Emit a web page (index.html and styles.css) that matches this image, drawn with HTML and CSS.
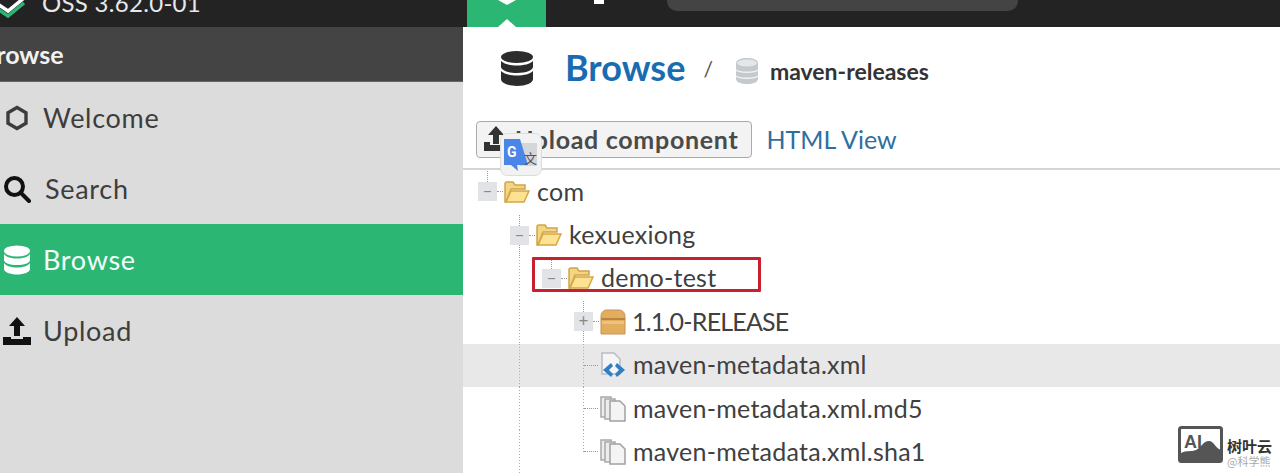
FILE: index.html
```html
<!DOCTYPE html>
<html lang="en">
<head>
    <meta charset="UTF-8">
    <title>Nexus Repository - Browse</title>
    <link rel="stylesheet" href="styles.css">
</head>
<body>
    <div class="topbar">
        <div class="brand">
            <svg class="brand-logo" width="26" height="27" viewBox="0 0 26 27" fill="none" stroke-width="3.500">
                <path d="M-1 10l9 6 16-13" stroke="#2bb673"/>
                <path d="M-1 5l9 6 16-13" stroke="#fff"/>
            </svg>
            <span class="brand-text">OSS 3.62.0-01</span>
        </div>
        <div class="mode-tab">
            <svg width="24" height="27" viewBox="0 0 24 27" fill="#fff"><path d="M3 0h18l-9 5z"/><path d="M3 27l9-8 9 8z"/></svg>
        </div>
        <div class="gear-stub"></div>
        <div class="search-stub"></div>
    </div>

    <div class="layout">
        <nav class="sidebar">
            <div class="sidebar-title">Browse</div>
            <a class="nav-item">
                <svg class="nav-icon" width="24" height="26" viewBox="0 0 24 26" fill="none" stroke="#3c3c3c" stroke-width="3.400"><path d="M12 2.500l9 5.200v10.600l-9 5.200-9-5.200V7.700z"/></svg>
                Welcome
            </a>
            <a class="nav-item nav-search">
                <svg class="nav-icon" width="28" height="28" viewBox="0 0 28 28" fill="none" stroke="#111" stroke-width="4"><circle cx="11.500" cy="11.500" r="8.500"/><path d="M18 18l8 8" stroke-linecap="round"/></svg>
                Search
            </a>
            <a class="nav-item active">
                <svg class="nav-icon" width="28" height="30" viewBox="0 0 28 30" fill="#fff"><ellipse cx="14" cy="6" rx="13" ry="5.500"/><path d="M1 9c2 3 7 4.500 13 4.500S25 12 27 9v6c0 3-6 5-13 5S1 18 1 15z"/><path d="M1 18c2 3 7 4.500 13 4.500S25 21 27 18v6c0 3-6 5.500-13 5.500S1 27 1 24z"/></svg>
                Browse
            </a>
            <a class="nav-item">
                <svg class="nav-icon" width="28" height="28" viewBox="0 0 28 28" fill="#111"><path d="M14 0l8 9h-5v10h-6V9H6z"/><path d="M0 20h8v2h12v-2h8v8H0z"/></svg>
                Upload
            </a>
        </nav>

        <main class="content">
            <div class="page-head">
                <svg class="head-icon" width="32" height="35" viewBox="0 0 32 35" fill="#2c2c2c"><ellipse cx="16" cy="6" rx="16" ry="6"/><path d="M0 10c3 3 9 4.500 16 4.500S29 13 32 10v6c0 3-7 6-16 6S0 19 0 16z"/><path d="M0 20c3 3 9 4.500 16 4.500S29 23 32 20v8c0 4-7 7-16 7S0 32 0 28z"/></svg>
                <h1 class="head-title">Browse</h1>
                <span class="head-sep">/</span>
                <svg class="repo-icon" width="24" height="26" viewBox="0 0 24 26"><path d="M1 5c0-3 5-5 11-5s11 2 11 5v16c0 3-5 5-11 5S1 24 1 21z" fill="#c4c9ce"/><ellipse cx="12" cy="5" rx="10" ry="3.500" fill="#e4e6e8"/><path d="M1 12c3 3 19 3 22 0M1 18c3 3 19 3 22 0" fill="none" stroke="#f2f2f2" stroke-width="1.500"/></svg>
                <span class="repo-name">maven-releases</span>
            </div>

            <div class="toolbar">
                <button class="upload-btn">
                    <svg width="24" height="26" viewBox="0 0 24 26" fill="#333"><path d="M13 0l8 9h-5v9h-6V9H5z"/><path d="M1 16h6v3h16v6H1z"/></svg>
                    Upload component
                </button>
                <a class="html-link">HTML View</a>
            </div>

            <div class="tree">
                <div class="row">
                    <span class="expander root">–</span>
                    <svg class="ico"><use href="#folder"/></svg>
                    <span class="label">com</span>
                </div>
                <div class="row">
                    <span class="indent"></span>
                    <span class="expander">–</span>
                    <svg class="ico"><use href="#folder"/></svg>
                    <span class="label">kexuexiong</span>
                </div>
                <div class="row">
                    <span class="indent"></span>
                    <span class="indent guide"></span>
                    <span class="expander root">–</span>
                    <svg class="ico"><use href="#folder"/></svg>
                    <span class="label">demo-test</span>
                    <span class="red-box"></span>
                </div>
                <div class="row">
                    <span class="indent"></span>
                    <span class="indent guide"></span>
                    <span class="indent"></span>
                    <span class="expander">+</span>
                    <svg class="ico"><use href="#box"/></svg>
                    <span class="label label-caps">1.1.0-RELEASE</span>
                </div>
                <div class="row selected">
                    <span class="indent"></span>
                    <span class="indent guide"></span>
                    <span class="indent"></span>
                    <span class="branch"></span>
                    <svg class="ico"><use href="#xml"/></svg>
                    <span class="label">maven-metadata.xml</span>
                </div>
                <div class="row">
                    <span class="indent"></span>
                    <span class="indent guide"></span>
                    <span class="indent"></span>
                    <span class="branch"></span>
                    <svg class="ico"><use href="#pages"/></svg>
                    <span class="label">maven-metadata.xml.md5</span>
                </div>
                <div class="row">
                    <span class="indent"></span>
                    <span class="indent guide"></span>
                    <span class="indent"></span>
                    <span class="branch last"></span>
                    <svg class="ico"><use href="#pages"/></svg>
                    <span class="label">maven-metadata.xml.sha1</span>
                </div>
            </div>

            <div class="translate-pop">
                <svg width="34" height="32" viewBox="0 0 34 32">
                    <path d="M14 4h19v23H16z" fill="#d4d6da"/>
                    <path d="M0 0h16l8 26H13l1 6-7-6H0z" fill="#4a86e8"/>
                    <text x="3" y="18" class="pop-g">G</text>
                    <text x="20" y="24" class="pop-w">文</text>
                </svg>
            </div>
        </main>
    </div>

    <div class="watermark">
        <svg width="46" height="38" viewBox="0 0 46 38">
            <rect x="1.500" y="1.500" width="42" height="34" rx="2" fill="#fff" stroke="#555" stroke-width="3"/>
            <path d="M3 36V27c6-3 10-1 15-3 6-3 7-9 13-9 5 0 6 7 12 9v12z" fill="#555"/>
            <text x="6" y="22" class="wm-ai">AI</text>
        </svg>
        <div class="wm-text">
            <span class="wm-name">树叶云</span>
            <span class="wm-sub">@科学熊</span>
        </div>
    </div>

    <svg class="defs" width="0" height="0">
        <symbol id="folder" viewBox="0 0 26 22">
            <path d="M1 21V3c0-1 .5-2 2-2h6l2 3h10v4H7L2 21z" fill="#f3d684" stroke="#cfa548" stroke-width="1.500"/>
            <path d="M2 21l5-11h18l-5 11z" fill="#fde391" stroke="#d6a544" stroke-width="1.500"/>
        </symbol>
        <symbol id="box" viewBox="0 0 26 26">
            <path d="M1 8c0-4 2-7 6-7h12c4 0 6 3 6 7v17H1z" fill="#e3ad5f" stroke="#c69350"/>
            <path d="M1 10h24" stroke="#b98440" stroke-width="2"/>
            <path d="M2 12h22v3H2z" fill="#eec27c"/>
        </symbol>
        <symbol id="xml" viewBox="0 0 26 26">
            <path d="M2 1h12l6 6v15H2z" fill="#f4f5f7" stroke="#b9bcc2" stroke-width="1.500"/>
            <path d="M11 11l-8 7 8 7 2-3-4-4 4-4z" fill="#2f7fc4"/>
            <path d="M17 11l8 7-8 7-2-3 4-4-4-4z" fill="#2f7fc4"/>
        </symbol>
        <symbol id="pages" viewBox="0 0 26 26">
            <path d="M1 1h10v20H1z" fill="#ededed" stroke="#a9a9a9" stroke-width="1.500"/>
            <path d="M5 3h10v20H5z" fill="#ededed" stroke="#a9a9a9" stroke-width="1.500"/>
            <path d="M10 5h10l5 5v15H10z" fill="#f4f4f4" stroke="#a0a0a0" stroke-width="1.500"/>
        </symbol>
    </svg>
</body>
</html>
```

FILE: styles.css
```css
html, body {
    margin: 0;
    height: 473px;
    overflow: hidden;
}
body {
    font-family: Lato, "Open Sans", sans-serif;
    background-color: #fff;
    color: #3d3d3d;
}

/* top bar, cut by the top of the picture */
.topbar {
    display: flex;
    align-items: flex-end;
    height: 27px;
    overflow: hidden;
    background-color: #232323;
}
.brand {
    display: flex;
    align-items: flex-end;
    width: 467px;
    flex-shrink: 0;
}
.brand-logo {
    margin-right: 16px;
}
.brand-text {
    color: #e8e8e8;
    font-size: 24px;
    line-height: 24px;
    letter-spacing: .3px;
    margin-bottom: 12px;
    white-space: nowrap;
}
.mode-tab {
    width: 79px;
    height: 27px;
    background-color: #2bb673;
    display: flex;
    justify-content: center;
}
.gear-stub {
    align-self: flex-start;
    width: 10px;
    height: 4px;
    margin-left: 48px;
    background-color: #fff;
}
.search-stub {
    align-self: flex-start;
    width: 351px;
    height: 11px;
    margin-left: 63px;
    background-color: #444;
    border-radius: 0 0 10px 10px;
}

.layout {
    display: flex;
    height: 446px;
}

/* left nav */
.sidebar {
    width: 463px;
    flex-shrink: 0;
    background-color: #dcdcdc;
}
.sidebar-title {
    height: 55px;
    line-height: 55px;
    margin-left: -20px;
    color: #f2f2f2;
    font-size: 25px;
    font-weight: 700;
    background-color: #444;
    border-bottom: 1px solid #666;
    box-sizing: border-box;
}
.nav-item {
    display: flex;
    align-items: center;
    height: 71px;
    padding-left: 3px;
    font-size: 27px;
    letter-spacing: .7px;
    color: #3d3d3d;
}
.nav-icon {
    width: 28px;
    margin-right: 12px;
}
.nav-search .nav-icon {
    margin-right: 14px;
}
.nav-item.active {
    background-color: #2bb673;
    color: #f2fff8;
}

/* main pane */
.content {
    position: relative;
    flex: 1;
    min-width: 0;
}
.page-head {
    display: flex;
    align-items: center;
    height: 83px;
    padding-left: 38px;
}
.head-icon {
    margin-right: 32px;
}
.head-title {
    margin: 0 18px 4px 0;
    color: #1a6cb2;
    font-size: 36px;
    font-weight: 700;
}
.head-sep {
    margin-right: 22px;
    font-size: 21px;
    color: #555;
}
.repo-icon {
    margin: 4px 11px 0 0;
}
.repo-name {
    margin-top: 4px;
    font-size: 23px;
    font-weight: 700;
    color: #333;
}
.toolbar {
    display: flex;
    align-items: center;
    height: 58px;
    padding-left: 13px;
    border-bottom: 2px solid #d4d4d4;
}
.upload-btn {
    display: flex;
    align-items: center;
    gap: 8px;
    height: 37px;
    padding: 0 13px 0 6px;
    font: 700 25px Lato, sans-serif;
    letter-spacing: .7px;
    color: #4a4a4a;
    background-color: #f3f3f3;
    border: 1px solid #aaa;
    border-radius: 4px;
}
.html-link {
    margin-left: 14px;
    font-size: 25px;
    color: #2f6f9f;
}

/* tree */
.row {
    position: relative;
    display: flex;
    align-items: center;
    height: 43.4px;
    padding-left: 15px;
}
.row.selected {
    background-color: #e8e8e8;
}
.indent {
    align-self: stretch;
    width: 32px;
    flex-shrink: 0;
}
.guide {
    background-image: linear-gradient(#aaa 50%, transparent 50%);
    background-size: 1px 3px;
    background-repeat: repeat-y;
    background-position: 9px 0;
}
.expander {
    position: relative;
    width: 19px;
    height: 19px;
    line-height: 17px;
    margin-right: 7px;
    flex-shrink: 0;
    text-align: center;
    color: #888;
    font-size: 17px;
    background-color: #e2e3e6;
}
.expander::before {
    content: "";
    position: absolute;
    left: 9px;
    top: -11px;
    bottom: -11px;
    z-index: -1;
    border-left: 1px dotted #999;
}
.expander.root::before {
    bottom: 100%;
}
.expander::after {
    content: "";
    position: absolute;
    left: 100%;
    width: 6px;
    top: 9px;
    border-top: 1px dotted #999;
}
.branch {
    position: relative;
    align-self: stretch;
    width: 19px;
    margin-right: 7px;
    flex-shrink: 0;
    background-image: linear-gradient(#aaa 50%, transparent 50%);
    background-size: 1px 3px;
    background-repeat: repeat-y;
    background-position: 9px 0;
}
.branch.last {
    background-size: 1px 3px;
    height: 22px;
    align-self: flex-start;
}
.branch::after {
    content: "";
    position: absolute;
    left: 10px;
    right: -5px;
    top: 21px;
    border-top: 1px dotted #999;
}
.ico {
    width: 26px;
    height: 26px;
    flex-shrink: 0;
}
.label {
    margin: 0 0 2px 7px;
    font-size: 25px;
    letter-spacing: .25px;
    color: #404040;
    white-space: nowrap;
}
.label-caps {
    margin-left: 6px;
    letter-spacing: -.8px;
}
.red-box {
    position: absolute;
    left: 69px;
    top: 0;
    width: 223px;
    height: 29px;
    border: 3px solid #c8202c;
    border-radius: 1px;
}
.translate-pop {
    position: absolute;
    left: 37px;
    top: 106px;
    display: flex;
    justify-content: center;
    align-items: center;
    width: 40px;
    height: 41px;
    background-color: #f2f2f2;
    border: 1px solid #ddd;
    border-radius: 7px;
}
.pop-g {
    font: 700 14px Roboto, sans-serif;
    fill: #fff;
}
.pop-w {
    font: 13px "Noto Sans CJK SC", sans-serif;
    fill: #555;
}

/* watermark */
.watermark {
    position: absolute;
    right: 8px;
    bottom: 9px;
    display: flex;
    align-items: flex-end;
    gap: 3px;
}
.wm-ai {
    font: 700 18px "Liberation Sans", sans-serif;
    fill: #555;
}
.wm-text {
    display: flex;
    flex-direction: column;
    margin-bottom: -4px;
    font-family: "Noto Sans CJK SC", sans-serif;
}
.wm-name {
    font-size: 15px;
    line-height: 17px;
    font-weight: 700;
    color: #333;
}
.wm-sub {
    font-size: 11px;
    line-height: 14px;
    color: #aaa;
}
.defs {
    position: absolute;
}
```
